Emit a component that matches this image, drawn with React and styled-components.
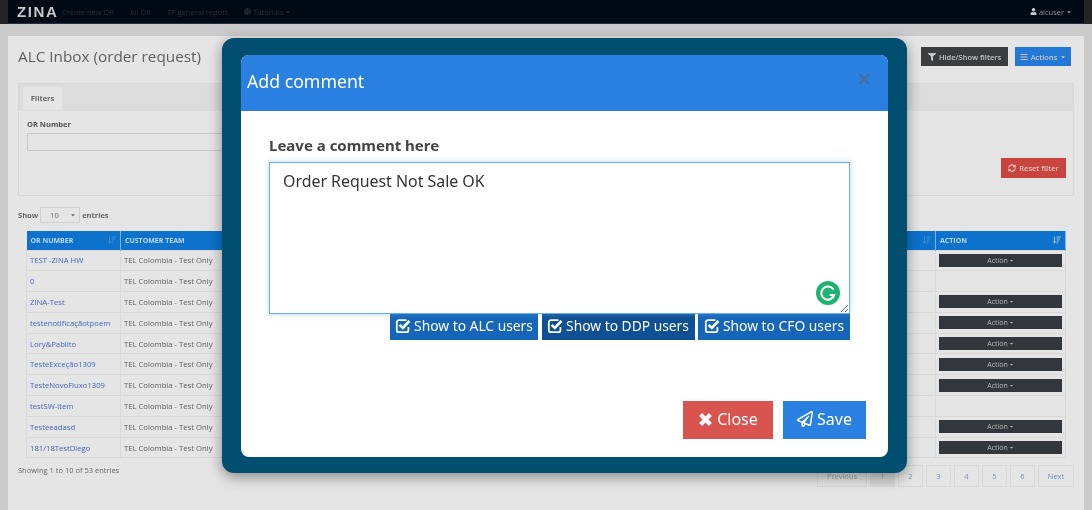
import styled, { createGlobalStyle } from 'styled-components';
import {
	FaBars,
	FaCaretDown,
	FaFilter,
	FaGlobe,
	FaRegPaperPlane,
	FaSortAmountDown,
	FaSyncAlt,
	FaUser,
} from 'react-icons/fa';

const ROWS = [
	{ name: 'TEST -ZINA HW', action: true },
	{ name: '0', action: false },
	{ name: 'ZINA-Test', action: true },
	{ name: 'testenotificaçãotpoem', action: true },
	{ name: 'Lory&Pablito', action: true },
	{ name: 'TesteExceção1309', action: true },
	{ name: 'TesteNovoFluxo1309', action: true },
	{ name: 'testSW-item', action: false },
	{ name: 'Testeeadasd', action: true },
	{ name: '181/18TestDiego', action: true },
];

const PAGES = [
	{ label: 'Previous', width: 50, muted: true },
	{ label: '1', width: 25, active: true },
	{ label: '2', width: 25 },
	{ label: '3', width: 25 },
	{ label: '4', width: 25 },
	{ label: '5', width: 25 },
	{ label: '6', width: 25 },
	{ label: 'Next', width: 36 },
];

// the old font awesome square with a heavy tick running out of its corner
const CheckIcon = () => (
	<svg width="16" height="16" viewBox="0 0 16 16" aria-hidden="true">
		<path
			d="M11.5 2.2H3.8A2 2 0 0 0 1.8 4.2v8a2 2 0 0 0 2 2h7.6a2 2 0 0 0 2-2V9"
			fill="none"
			stroke="#fff"
			strokeWidth="1.8"
		/>
		<path d="M4.6 6.8l3.2 3.2 6.6-7" fill="none" stroke="#fff" strokeWidth="2.6" />
	</svg>
);

const CrossIcon = () => (
	<svg width="15" height="15" viewBox="0 0 15 15" aria-hidden="true">
		<path d="M2.6 2.6l9.8 9.8M12.4 2.6l-9.8 9.8" fill="none" stroke="#fff" strokeWidth="4.2" />
	</svg>
);

const GrammarlyIcon = () => (
	<GrammarlyBadge viewBox="0 0 24 24" aria-hidden="true">
		<circle cx="12" cy="12" r="12" fill="#20b26f" />
		<path d="M17.4 8.6A6.6 6.6 0 1 0 18.2 14h-4.6" fill="none" stroke="#fff" strokeWidth="2" />
		<path d="M16.6 14l1.8 3.2-3.8 0z" fill="#fff" />
	</GrammarlyBadge>
);

const App = () => {
	return (
		<>
			<GlobalStyle />
			<Page>
				<TopStrip>
					<Navbar>
						<Logo>ZINA</Logo>
						<NavLink>Create new OR</NavLink>
						<NavLink>All OR</NavLink>
						<NavLink>TP general report</NavLink>
						<NavLink>
							<FaGlobe size={7} /> Tutorials <FaCaretDown size={6} />
						</NavLink>
						<NavUser>
							<FaUser size={7} /> alcuser <FaCaretDown size={6} />
						</NavUser>
					</Navbar>
				</TopStrip>
				<Panel>
					<TitleRow>
						<Title>ALC Inbox (order request)</Title>
						<SmallBtn $bg="#3a3c3e" $width={87}>
							<FaFilter size={8} /> Hide/Show filters
						</SmallBtn>
						<SmallBtn $bg="#2378d6" $width={56}>
							<FaBars size={8} /> Actions <FaCaretDown size={6} />
						</SmallBtn>
					</TitleRow>
					<FilterBox>
						<TabBar>
							<Tab>Filters</Tab>
						</TabBar>
						<FilterBody>
							<FieldLabel>OR Number</FieldLabel>
							<FieldInput />
							<ResetBtn>
								<FaSyncAlt size={8} /> Reset filter
							</ResetBtn>
						</FilterBody>
					</FilterBox>
					<Entries>
						Show
						<EntriesSelect>
							10 <FaCaretDown size={6} />
						</EntriesSelect>
						entries
					</Entries>
					<Table>
						<colgroup>
							<Col $width={94} />
							<Col $width={200} />
							<Col />
							<Col $width={130} />
						</colgroup>
						<thead>
							<tr>
								<Th>
									OR NUMBER
									<SortIcon $faded>
										<FaSortAmountDown size={8} />
									</SortIcon>
								</Th>
								<Th>CUSTOMER TEAM</Th>
								<Th>
									<SortIcon $faded>
										<FaSortAmountDown size={8} />
									</SortIcon>
								</Th>
								<Th>
									ACTION
									<SortIcon>
										<FaSortAmountDown size={8} />
									</SortIcon>
								</Th>
							</tr>
						</thead>
						<tbody>
							{ROWS.map(row => (
								<tr key={row.name}>
									<Td $link>{row.name}</Td>
									<Td>TEL Colombia - Test Only</Td>
									<Td />
									<Td>
										{row.action && (
											<ActionBtn>
												Action <FaCaretDown size={5} />
											</ActionBtn>
										)}
									</Td>
								</tr>
							))}
						</tbody>
					</Table>
					<TableFooter>
						<Showing>Showing 1 to 10 of 53 entries</Showing>
						<Pagination>
							{PAGES.map(page => (
								<PageItem
									key={page.label}
									$width={page.width}
									$active={page.active}
									$muted={page.muted}
								>
									{page.label}
								</PageItem>
							))}
						</Pagination>
					</TableFooter>
				</Panel>
			</Page>
			<ModalFrame>
				<Modal>
					<ModalHeader>
						<ModalTitle>Add comment</ModalTitle>
						<ModalClose>×</ModalClose>
					</ModalHeader>
					<ModalBody>
						<CommentLabel>Leave a comment here</CommentLabel>
						<TextareaWrap>
							<Comment defaultValue="Order Request Not Sale OK" spellCheck={false} />
							<GrammarlyIcon />
						</TextareaWrap>
						<ShowRow>
							<ShowBtn $width={148}>
								<CheckIcon /> Show to ALC users
							</ShowBtn>
							<ShowBtn $width={153} $active>
								<CheckIcon /> Show to DDP users
							</ShowBtn>
							<ShowBtn $width={152}>
								<CheckIcon /> Show to CFO users
							</ShowBtn>
						</ShowRow>
						<ModalFooter>
							<FooterBtn $bg="#d9534f" $width={90}>
								<CrossIcon /> Close
							</FooterBtn>
							<FooterBtn $bg="#2a80e0" $width={83}>
								<FaRegPaperPlane size={16} /> Save
							</FooterBtn>
						</ModalFooter>
					</ModalBody>
				</Modal>
			</ModalFrame>
		</>
	);
};

export default App;

const GlobalStyle = createGlobalStyle`
	html, body {
		margin: 0;
		height: 100%;
		overflow: hidden;
		background: #cbcbcb;
	}
	* {
		box-sizing: border-box;
	}
`;

const Page = styled.div`
	height: 510px;
	overflow: hidden;
	background: #cbcbcb;
	font-family: 'Open Sans', sans-serif;
	filter: blur(0.7px);
`;

const TopStrip = styled.div`
	padding: 0 8px;
	background: #242424;
`;

const Navbar = styled.div`
	height: 24px;
	padding: 0 12px 0 9px;
	display: flex;
	align-items: center;
	background: #010a14;
	border-bottom: 1px solid #1c3146;
`;

const Logo = styled.div`
	width: 45px;
	font-family: 'Liberation Sans', sans-serif;
	font-size: 15px;
	font-weight: 700;
	letter-spacing: 1.6px;
	color: #c8c8c8;
`;

const NavLink = styled.div`
	margin-right: 16px;
	font-size: 7.5px;
	color: #20303c;
	display: flex;
	align-items: center;
	gap: 2px;
`;

const NavUser = styled.div`
	margin-left: auto;
	font-size: 7.5px;
	color: #8d9298;
	display: flex;
	align-items: center;
	gap: 2px;

	svg:first-child {
		color: #c8c8c8;
	}
`;

const Panel = styled.div`
	height: 474px;
	margin: 12px 8px 0;
	padding: 11px 10px 0;
	background: #e5e5e5;
`;

const TitleRow = styled.div`
	height: 36px;
	display: flex;
	align-items: flex-start;
	gap: 7px;
	padding-right: 3px;
`;

const Title = styled.h1`
	margin: -1px auto 0 0;
	font-size: 15.3px;
	font-weight: 400;
	line-height: 20px;
	color: #5f5f5f;
`;

const SmallBtn = styled.div`
	width: ${({ $width }) => $width}px;
	height: 19px;
	display: flex;
	align-items: center;
	justify-content: center;
	gap: 3px;
	font-size: 7.5px;
	font-weight: 600;
	white-space: nowrap;
	color: #c4c6c8;
	background: ${({ $bg }) => $bg};
`;

const FilterBox = styled.div`
	width: 1056px;
	height: 113px;
	background: #e5e5e5;
	border: 1px solid #d6d6d6;
`;

const TabBar = styled.div`
	height: 27px;
	padding: 3px 0 0 4px;
	background: #dcdcdc;
`;

const Tab = styled.div`
	width: 39px;
	height: 23px;
	font-size: 7.5px;
	font-weight: 700;
	line-height: 23px;
	text-align: center;
	color: #666;
	background: #e5e5e5;
`;

const FilterBody = styled.div`
	padding: 8px 7px 0 8px;
`;

const FieldLabel = styled.div`
	font-size: 7.5px;
	font-weight: 700;
	line-height: 10px;
	color: #555;
`;

const FieldInput = styled.div`
	width: 300px;
	height: 18px;
	margin-top: 4px;
	border: 1px solid #c8c8c8;
`;

const ResetBtn = styled.div`
	width: 65px;
	height: 20px;
	margin: 7px 0 0 auto;
	display: flex;
	align-items: center;
	justify-content: center;
	gap: 3px;
	font-size: 7.5px;
	font-weight: 600;
	color: #e0c4c2;
	background: #c9443f;
`;

const Entries = styled.div`
	height: 35px;
	padding-top: 11px;
	display: flex;
	align-items: flex-start;
	gap: 2px;
	font-size: 7.5px;
	font-weight: 700;
	line-height: 16px;
	color: #666;
`;

const EntriesSelect = styled.div`
	width: 40px;
	height: 16px;
	padding: 0 3px 0 9px;
	display: flex;
	align-items: center;
	justify-content: space-between;
	font-weight: 400;
	border: 1px solid #cfcfcf;
`;

const Table = styled.table`
	width: 1040px;
	margin-left: 8px;
	table-layout: fixed;
	border-collapse: collapse;
`;

const Col = styled.col`
	width: ${({ $width }) => ($width ? `${$width}px` : 'auto')};
`;

const Th = styled.th`
	position: relative;
	height: 19px;
	padding: 0 4px;
	font-size: 7px;
	font-weight: 700;
	text-align: left;
	color: #bcd8f0;
	background: #0c72cc;
	border-right: 1px solid #7fb0dc;
`;

const SortIcon = styled.span`
	position: absolute;
	top: 5px;
	right: 4px;
	color: #9cc4e8;
	opacity: ${({ $faded }) => ($faded ? 0.35 : 1)};
`;

const Td = styled.td`
	height: 20.8px;
	padding: 0 3px;
	font-size: 7.7px;
	white-space: nowrap;
	overflow: hidden;
	color: ${({ $link }) => ($link ? '#3f66c0' : '#606060')};
	border: 1px solid #d8d8d8;
`;

const ActionBtn = styled.div`
	height: 13px;
	display: flex;
	align-items: center;
	justify-content: center;
	gap: 1px;
	font-size: 7px;
	color: #b8babc;
	background: #33363a;
`;

const TableFooter = styled.div`
	margin-top: 7px;
	display: flex;
	align-items: flex-start;
	justify-content: space-between;
`;

const Showing = styled.div`
	font-size: 7.5px;
	line-height: 10px;
	color: #666;
`;

const Pagination = styled.div`
	display: flex;
	gap: 3px;
`;

const PageItem = styled.div`
	width: ${({ $width }) => $width}px;
	height: 22px;
	font-size: 7.5px;
	line-height: 20px;
	text-align: center;
	color: ${({ $active, $muted }) => ($active || $muted ? '#a0a0a0' : '#6f8fd0')};
	background: ${({ $active }) => ($active ? '#d8d8d8' : 'transparent')};
	border: 1px solid #d8d8d8;
`;

const ModalFrame = styled.div`
	position: fixed;
	top: 38px;
	left: 222px;
	width: 685px;
	height: 435px;
	padding: 17px 19px 16px;
	background: #004f70;
	border-radius: 12px;
	box-shadow: 0 4px 14px rgba(0, 0, 0, 0.4);
	font-family: 'Noto Sans', sans-serif;
`;

const Modal = styled.div`
	height: 100%;
	display: flex;
	flex-direction: column;
	overflow: hidden;
	background: #fff;
	border-radius: 8px;
`;

const ModalHeader = styled.div`
	height: 56px;
	padding: 0 17px 4px 6px;
	display: flex;
	align-items: center;
	justify-content: space-between;
	background: #2a80e0;
`;

const ModalTitle = styled.div`
	font-size: 17.7px;
	color: #fff;
`;

const ModalClose = styled.div`
	margin-top: -4px;
	font-size: 23px;
	font-weight: 700;
	font-family: 'Liberation Sans', sans-serif;
	color: #3f6fa6;
`;

const ModalBody = styled.div`
	flex: 1;
	padding: 23px 22px 18px 28px;
	display: flex;
	flex-direction: column;
`;

const CommentLabel = styled.div`
	font-size: 15px;
	font-weight: 700;
	line-height: 22px;
	color: #444;
`;

const TextareaWrap = styled.div`
	position: relative;
	width: 581px;
	height: 152px;
	margin-top: 6px;
`;

const Comment = styled.textarea`
	display: block;
	width: 100%;
	height: 100%;
	padding: 8px 13px;
	font-family: inherit;
	font-size: 15.9px;
	line-height: 21px;
	color: #333;
	background: #fff;
	border: 1px solid #66afe9;
	box-shadow: 0 0 6px rgba(102, 175, 233, 0.45);
	outline: none;
`;

const GrammarlyBadge = styled.svg`
	position: absolute;
	right: 10px;
	bottom: 9px;
	width: 24px;
	height: 24px;
`;

const ShowRow = styled.div`
	width: 581px;
	display: flex;
	justify-content: flex-end;
	gap: 3.5px;
`;

const ShowBtn = styled.div`
	width: ${({ $width }) => $width}px;
	height: 26px;
	padding-bottom: 3px;
	display: flex;
	align-items: center;
	justify-content: center;
	gap: 3px;
	font-size: 13.8px;
	white-space: nowrap;
	color: #fff;
	background: ${({ $active }) => ($active ? '#0f4f94' : '#1565b8')};
`;

const ModalFooter = styled.div`
	margin-top: auto;
	display: flex;
	justify-content: flex-end;
	gap: 10px;
`;

const FooterBtn = styled.div`
	width: ${({ $width }) => $width}px;
	height: 38px;
	padding-bottom: 2px;
	display: flex;
	align-items: center;
	justify-content: center;
	gap: 4px;
	font-size: 16px;
	color: #fff;
	background: ${({ $bg }) => $bg};
`;
